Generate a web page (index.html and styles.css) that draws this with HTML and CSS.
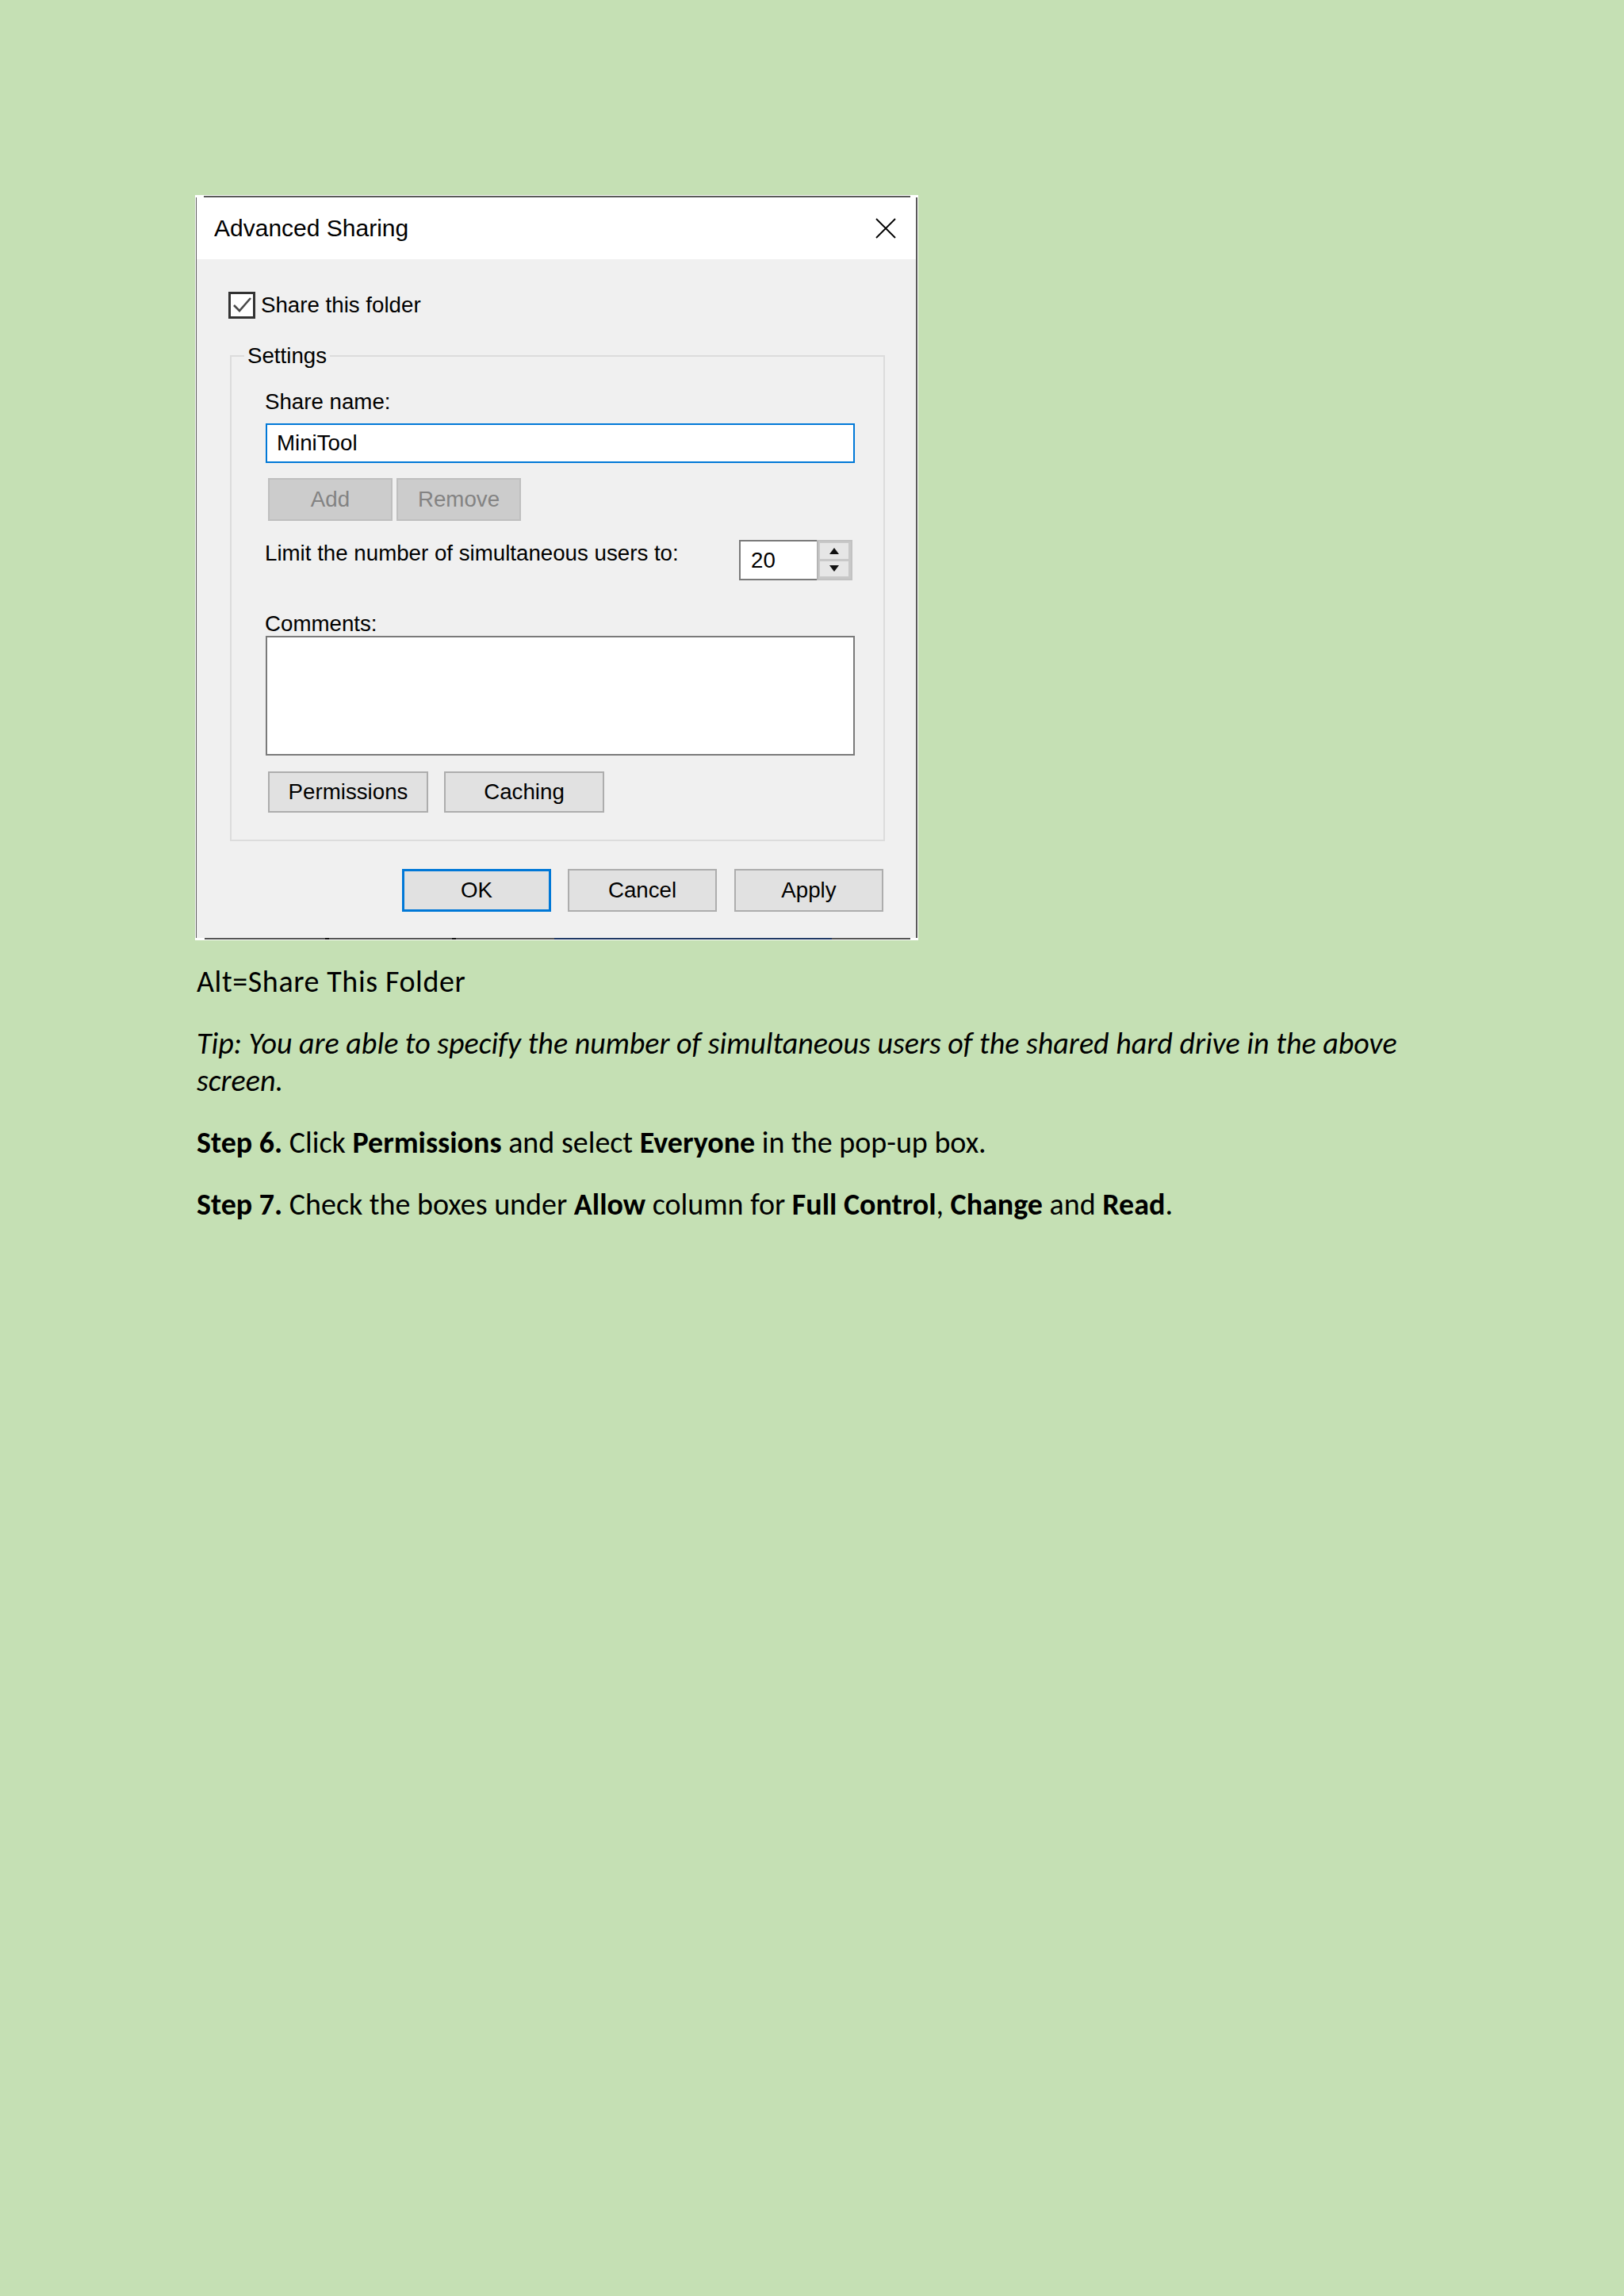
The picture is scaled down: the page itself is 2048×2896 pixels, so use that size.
FILE: index.html
```html
<!DOCTYPE html>
<html lang="en">
<head>
<meta charset="utf-8">
<title>Advanced Sharing</title>
<link rel="stylesheet" href="styles.css">
</head>
<body>
<div class="page">
  <div class="dialog">
    <div class="topline"></div>
    <div class="win">
      <div class="titlebar">
        <span class="title">Advanced Sharing</span>
        <svg class="close" width="26" height="26" viewBox="0 0 26 26"><path d="M1 1 L25 25 M25 1 L1 25" stroke="#000" stroke-width="1.8" fill="none"/></svg>
      </div>
      <div class="body">
        <div class="check-row">
          <span class="checkbox"><svg width="28" height="28" viewBox="0 0 28 28"><path d="M4 14 L11 21 L25 5" stroke="#4a4a4a" stroke-width="2.6" fill="none"/></svg></span>
          <span>Share this folder</span>
        </div>
        <fieldset class="group">
          <legend>Settings</legend>
          <div class="group-inner">
            <div class="label">Share name:</div>
            <div class="input">MiniTool</div>
            <div class="btn-row">
              <div class="btn disabled">Add</div>
              <div class="btn disabled">Remove</div>
            </div>
            <div class="limit-row">
              <span class="limit-label">Limit the number of simultaneous users to:</span>
              <div class="spin">
                <div class="spin-field">20</div>
                <div class="spin-btns">
                  <div class="spin-up"><svg width="12" height="8" viewBox="0 0 12 8"><path d="M6 0 L12 8 L0 8 Z" fill="#111"/></svg></div>
                  <div class="spin-down"><svg width="12" height="8" viewBox="0 0 12 8"><path d="M0 0 L12 0 L6 8 Z" fill="#111"/></svg></div>
                </div>
              </div>
            </div>
            <div class="label comments-label">Comments:</div>
            <div class="textarea"></div>
            <div class="btn-row perm-row">
              <div class="btn">Permissions</div>
              <div class="btn">Caching</div>
            </div>
          </div>
        </fieldset>
        <div class="footer">
          <div class="btn primary">OK</div>
          <div class="btn">Cancel</div>
          <div class="btn apply">Apply</div>
        </div>
      </div>
    </div>
    <div class="bottomline">
      <span class="seg w1"></span>
      <span class="seg g1"></span>
      <span class="seg k"></span>
      <span class="seg g2"></span>
      <span class="seg k"></span>
      <span class="seg g3"></span>
      <span class="seg navy"></span>
      <span class="seg g4"></span>
    </div>
  </div>

  <div class="doc">
    <p class="alt">Alt=Share This Folder</p>
    <p class="tip"><em>Tip: You are able to specify the number of simultaneous users of the shared hard drive in the above<br>screen.</em></p>
    <p><b>Step 6.</b> Click <b>Permissions</b> and select <b>Everyone</b> in the pop-up box.</p>
    <p><b>Step 7.</b> Check the boxes under <b>Allow</b> column for <b>Full Control</b>, <b>Change</b> and <b>Read</b>.</p>
  </div>
</div>
</body>
</html>
```

FILE: styles.css
```css
html, body {
  margin: 0;
  background: #c5e0b4;
}

.page {
  padding: 246px 0 0 246px;
  min-height: 2896px;
  box-sizing: border-box;
}

/* ---------- dialog ---------- */
.dialog {
  width: 912px;
  background: #fff;
  padding: 1px;
  box-sizing: border-box;
  font-family: "Liberation Sans", Arial, sans-serif;
  font-size: 27.7px;
  color: #000;
}

.topline {
  height: 2px;
  background: #5a5a5a;
  margin: 0 9px 0 10px;
}

.win {
  border-left: 1px solid #5a5a5a;
  border-right: 2px solid #5a5a5a;
}

.titlebar {
  height: 78px;
  background: #fff;
  display: flex;
  align-items: center;
  justify-content: space-between;
  padding: 0 25px 0 22px;
}

.title {
  font-size: 30px;
}

.close {
  display: block;
}

.body {
  background: #f0f0f0;
  padding: 41px 0 33px 40px;
}

.check-row {
  display: flex;
  align-items: center;
  gap: 7px;
  height: 34px;
}

.checkbox {
  width: 34px;
  height: 34px;
  border: 3px solid #333;
  background: #fff;
  box-sizing: border-box;
  display: flex;
  align-items: center;
  justify-content: center;
}

.checkbox svg {
  display: block;
}

.group {
  margin: 32px 0 0 2px;
  width: 826px;
  box-sizing: border-box;
  border: 2px solid #dcdcdc;
  padding: 27px 0 34px 0;
  min-width: 0;
}

.group legend {
  padding: 0 4px;
  margin-left: 16px;
  line-height: 30px;
}

.group-inner {
  padding: 0 36px 0 42px;
}

.label {
  line-height: 32px;
}

.input {
  margin: 11px 0 0 1px;
  width: 743px;
  height: 50px;
  border: 2px solid #0078d7;
  background: #fff;
  box-sizing: border-box;
  padding-left: 12px;
  display: flex;
  align-items: center;
}

.btn-row {
  display: flex;
  gap: 5px;
  margin: 19px 0 0 4px;
}

.btn {
  box-sizing: border-box;
  height: 54px;
  display: flex;
  align-items: center;
  justify-content: center;
  background: #e1e1e1;
  border: 2px solid #adadad;
}

.btn.disabled {
  width: 157px;
  background: #cccccc;
  border-color: #bfbfbf;
  color: #838383;
}

.limit-row {
  display: flex;
  justify-content: space-between;
  align-items: flex-start;
  margin-top: 24px;
  padding-right: 3px;
}

.limit-label {
  line-height: 32px;
  margin-top: 1px;
}

.spin {
  display: flex;
  height: 51px;
}

.spin-field {
  width: 98px;
  border: 2px solid #7a7a7a;
  border-right: none;
  background: #fff;
  box-sizing: border-box;
  padding-left: 13px;
  display: flex;
  align-items: center;
}

.spin-btns {
  width: 45px;
  box-sizing: border-box;
  border: 2px solid #c2c2c2;
  border-left-color: #b5b5b5;
  background: #c8c8c8;
  display: flex;
  flex-direction: column;
  gap: 3px;
  padding: 2px 3px 3px 2px;
}

.spin-up,
.spin-down {
  flex: 1;
  background: #e6e6e6;
  display: flex;
  align-items: center;
  justify-content: center;
}

.spin-up svg,
.spin-down svg {
  display: block;
}

.comments-label {
  margin-top: 39px;
  line-height: 31px;
}

.textarea {
  margin-left: 1px;
  width: 743px;
  height: 151px;
  border: 2px solid #7a7a7a;
  background: #fff;
  box-sizing: border-box;
}

.perm-row {
  margin-top: 20px;
  gap: 20px;
}

.perm-row .btn {
  width: 202px;
  height: 52px;
}

.footer {
  display: flex;
  justify-content: flex-end;
  gap: 21px;
  margin-top: 35px;
  padding-right: 41px;
}

.footer .btn {
  width: 188px;
  height: 54px;
}

.footer .btn.apply {
  margin-left: 1px;
}

.btn.primary {
  border: 3px solid #0078d7;
}

.bottomline {
  display: flex;
  height: 2px;
}

.seg { display: block; height: 2px; }
.w1 { width: 11px; }
.g1 { width: 152px; background: #555; }
.k { width: 5px; background: #111; }
.g2 { width: 155px; background: #555; }
.g3 { width: 124px; background: #555; }
.navy { width: 350px; background: #1f3864; }
.g4 { width: 99px; background: #555; }

/* ---------- document text ---------- */
.doc {
  margin-left: 2px;
  font-family: Carlito, Lato, "Liberation Sans", sans-serif;
  font-size: 38px;
  line-height: 47px;
  color: #000;
}

.doc p {
  margin: 0 0 31px;
}

.doc .alt {
  margin-top: 29px;
  letter-spacing: 0.6px;
}

.doc b {
  font-weight: 700;
}
```
